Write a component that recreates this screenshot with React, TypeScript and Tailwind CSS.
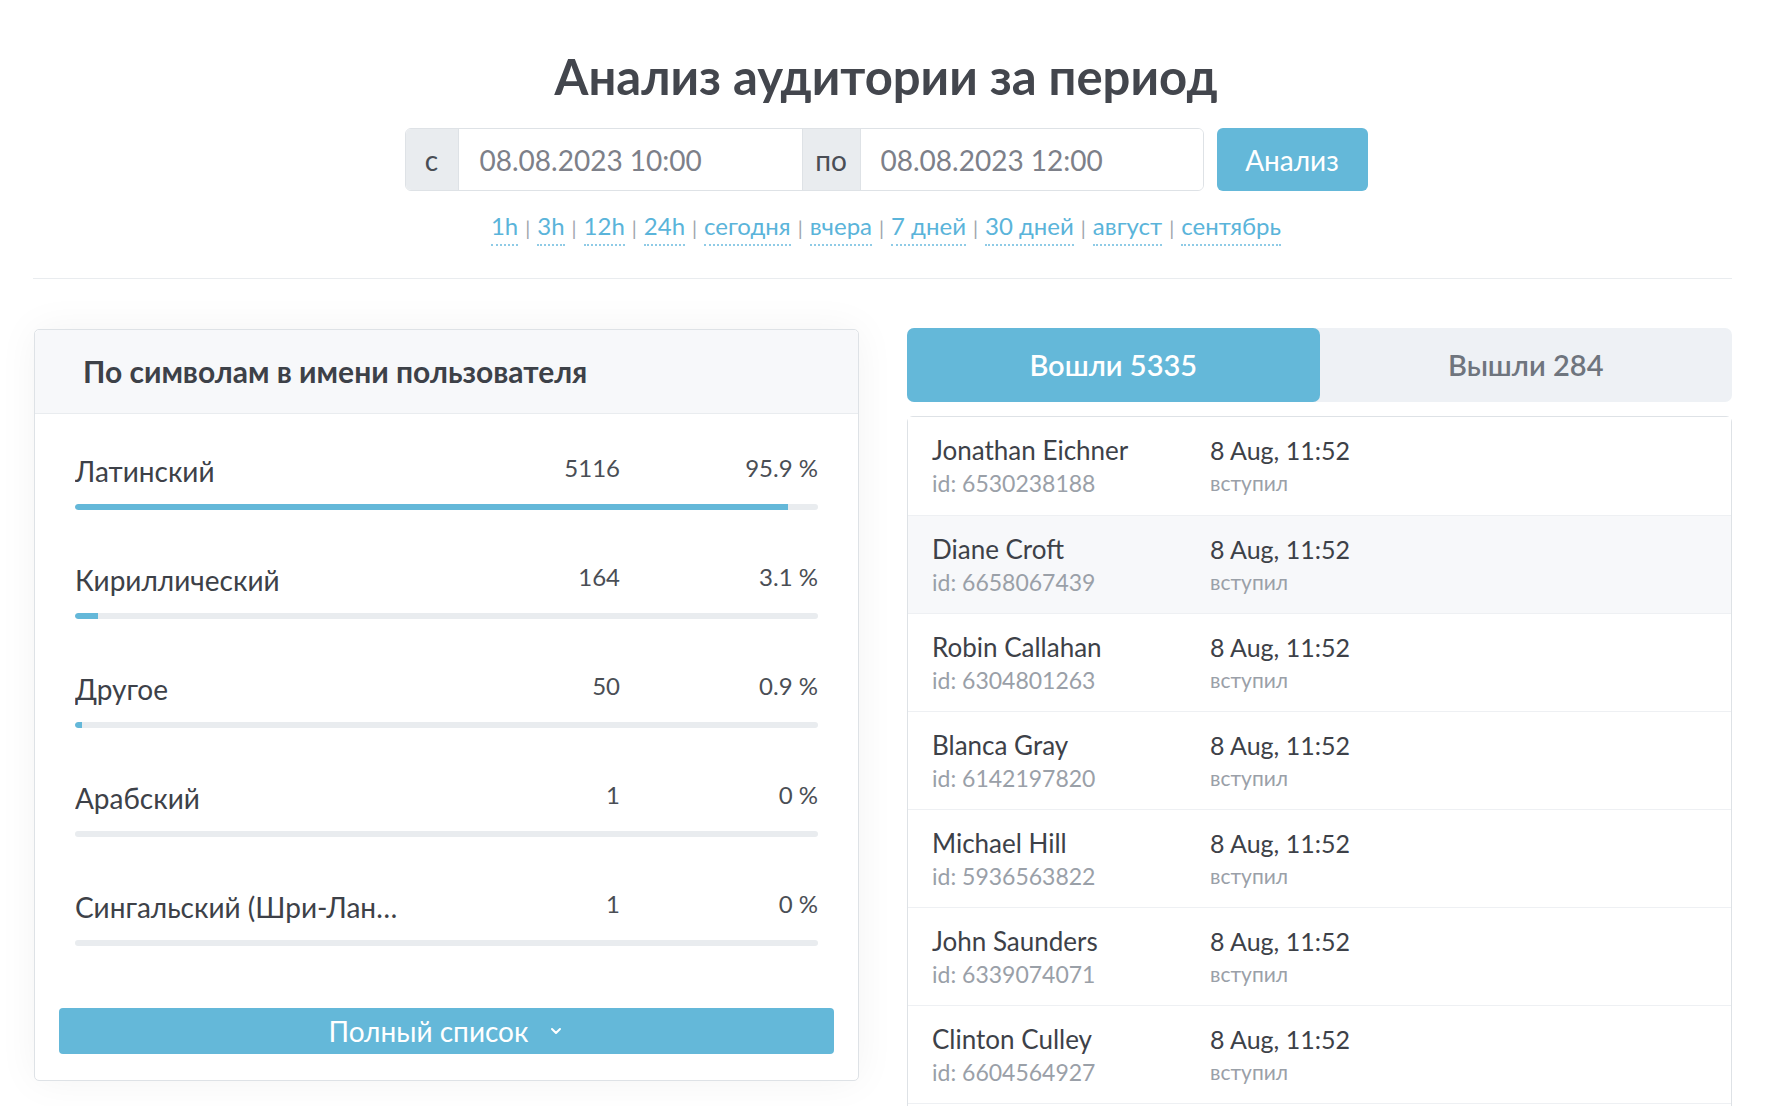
import { ChevronDown } from "lucide-react";

const periods = ["1h", "3h", "12h", "24h", "сегодня", "вчера", "7 дней", "30 дней", "август", "сентябрь"];

const scripts = [
  { name: "Латинский", count: 5116, pct: 95.9 },
  { name: "Кириллический", count: 164, pct: 3.1 },
  { name: "Другое", count: 50, pct: 0.9 },
  { name: "Арабский", count: 1, pct: 0 },
  { name: "Сингальский (Шри-Ланка)", count: 1, pct: 0 },
];

const members = [
  { name: "Jonathan Eichner", id: "6530238188" },
  { name: "Diane Croft", id: "6658067439" },
  { name: "Robin Callahan", id: "6304801263" },
  { name: "Blanca Gray", id: "6142197820" },
  { name: "Michael Hill", id: "5936563822" },
  { name: "John Saunders", id: "6339074071" },
  { name: "Clinton Culley", id: "6604564927" },
  { name: "Mary Porter", id: "6211408735" },
];

export default function App() {
  return (
    <div className="min-h-screen bg-white font-['Lato','Noto_Sans',sans-serif] text-[#3d4148]">
      <div className="flex flex-col items-center pt-[46px]">
        <h1 className="text-[49px] leading-[60px] font-bold text-[#43464d]">Анализ аудитории за период</h1>
        <div className="flex items-stretch gap-[13px] mt-[22px] h-[63px]">
          <div className="flex rounded-[6px] border border-[#dee2e6] overflow-hidden text-[28px]">
            <div className="w-[53px] flex items-center justify-center bg-[#e9ecef] text-[#4a4e55] border-r border-[#dee2e6]">с</div>
            <div className="w-[344px] flex items-center pl-[21px] bg-white text-[#7d8089] border-r border-[#dee2e6]">08.08.2023 10:00</div>
            <div className="w-[58px] flex items-center justify-center bg-[#e9ecef] text-[#4a4e55] border-r border-[#dee2e6]">по</div>
            <div className="w-[342px] flex items-center pl-[20px] bg-white text-[#7d8089]">08.08.2023 12:00</div>
          </div>
          <button className="w-[151px] rounded-[6px] bg-[#64b8d9] text-white text-[28px]">Анализ</button>
        </div>
        <div className="flex items-center mt-[19px] text-[24px] leading-[32px]">
          {periods.map((p, i) => (
            <div key={p} className="flex items-center">
              {i > 0 && <span className="mx-[7px] text-[#a0a5ac] text-[20px]">|</span>}
              <span className="text-[#5ab4da] border-b-2 border-dotted border-[#8fcbe6] pb-[2px]">{p}</span>
            </div>
          ))}
        </div>
      </div>

      <div className="ml-[33px] w-[1699px] mt-[32px] border-t border-[#e9ecef]" />

      <div className="ml-[34px] w-[1698px] grid grid-cols-2 gap-[48px] mt-[50px]">
        <div className="rounded-[5px] border border-[#dee2e6] bg-white shadow-[0_0_40px_rgba(0,0,0,0.05)] self-start">
          <div className="h-[84px] flex items-center pl-[48px] bg-[#f7f8fa] border-b border-[#e9ecef] rounded-t-[5px]">
            <h2 className="text-[30px] font-bold text-[#3d4148]">По символам в имени пользователя</h2>
          </div>
          <div className="px-[40px] pt-[40px]">
            {scripts.map((s) => (
              <div key={s.name} className="mb-[53px]">
                <div className="flex items-center h-[34px]">
                  <div className="w-[344px] shrink-0 truncate text-[28px] leading-[34px] text-[#3d4148] pr-4">{s.name}</div>
                  <div className="flex-1 text-right text-[24px] text-[#4a4e55] -mt-[6px]">{s.count}</div>
                  <div className="w-[198px] text-right text-[24px] text-[#4a4e55] -mt-[6px]">{s.pct} %</div>
                </div>
                <div className="mt-[16px] h-[6px] rounded-full bg-[#e9ecef] overflow-hidden">
                  <div className="h-full bg-[#64b8d9] rounded-l-full" style={{ width: `${s.pct}%` }} />
                </div>
              </div>
            ))}
          </div>
          <div className="px-[24px] pb-[26px] mt-[62px]">
            <button className="w-full h-[46px] rounded-[4px] bg-[#64b8d9] text-white text-[28px] flex items-center justify-center gap-[20px]">
              Полный список
              <ChevronDown size={16} strokeWidth={3} />
            </button>
          </div>
        </div>

        <div className="-mt-[1px]">
          <div className="grid grid-cols-2 h-[74px] rounded-[7px] bg-[#eef1f5] text-[29px] font-semibold">
            <div className="flex items-center justify-center rounded-[7px] bg-[#64b8d9] text-white">Вошли 5335</div>
            <div className="flex items-center justify-center text-[#6f757e]">Вышли 284</div>
          </div>
          <div className="mt-[14px] rounded-t-[6px] border border-[#dee2e6]">
            {members.map((m, i) => (
              <div
                key={m.id}
                className={`flex h-[98px] pt-[16px] pl-[24px] border-t border-[#eef0f3] first:border-t-0 ${i === 1 ? "bg-[#f7f8fa]" : "bg-white"}`}
              >
                <div className="w-[278px]">
                  <div className="text-[26px] leading-[34px] text-[#3d4148]">{m.name}</div>
                  <div className="text-[23px] leading-[32px] text-[#9aa0a8]">id: {m.id}</div>
                </div>
                <div>
                  <div className="text-[25px] leading-[34px] text-[#3d4148]">8 Aug, 11:52</div>
                  <div className="text-[21px] leading-[32px] text-[#9aa0a8]">вступил</div>
                </div>
              </div>
            ))}
          </div>
        </div>
      </div>
    </div>
  );
}
